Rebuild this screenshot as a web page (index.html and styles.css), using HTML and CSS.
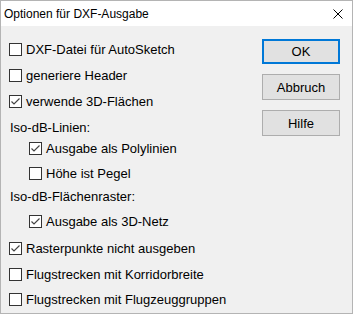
FILE: index.html
```html
<!DOCTYPE html>
<html lang="de">
<head>
<meta charset="utf-8">
<title>Optionen für DXF-Ausgabe</title>
<link rel="stylesheet" href="styles.css">
</head>
<body>
<div class="window">
  <div class="titlebar">
    <span class="title">Optionen für DXF-Ausgabe</span>
    <svg class="close" width="10" height="10" viewBox="0 0 10 10"><path d="M0.5 0.5 L9.5 9.5 M9.5 0.5 L0.5 9.5" stroke="#000" stroke-width="1" fill="none"/></svg>
  </div>
  <div class="content">
    <div class="options">
      <div class="row r26"><span class="box"></span><span class="lbl">DXF-Datei für AutoSketch</span></div>
      <div class="row r26"><span class="box"></span><span class="lbl">generiere Header</span></div>
      <div class="row r26"><span class="box checked"><svg width="11" height="11" viewBox="0 0 11 11"><polyline points="1.5,5.5 4,8 9.5,2.5" fill="none" stroke="#444" stroke-width="1.2"/></svg></span><span class="lbl">verwende 3D-Flächen</span></div>
      <div class="row r21"><span class="lbl heading">Iso-dB-Linien:</span></div>
      <div class="row r25 indent"><span class="box checked"><svg width="11" height="11" viewBox="0 0 11 11"><polyline points="1.5,5.5 4,8 9.5,2.5" fill="none" stroke="#444" stroke-width="1.2"/></svg></span><span class="lbl">Ausgabe als Polylinien</span></div>
      <div class="row r23 indent"><span class="box"></span><span class="lbl">Höhe ist Pegel</span></div>
      <div class="row r25"><span class="lbl heading">Iso-dB-Flächenraster:</span></div>
      <div class="row r27 indent"><span class="box checked"><svg width="11" height="11" viewBox="0 0 11 11"><polyline points="1.5,5.5 4,8 9.5,2.5" fill="none" stroke="#444" stroke-width="1.2"/></svg></span><span class="lbl">Ausgabe als 3D-Netz</span></div>
      <div class="row r26"><span class="box checked"><svg width="11" height="11" viewBox="0 0 11 11"><polyline points="1.5,5.5 4,8 9.5,2.5" fill="none" stroke="#444" stroke-width="1.2"/></svg></span><span class="lbl">Rasterpunkte nicht ausgeben</span></div>
      <div class="row r25"><span class="box"></span><span class="lbl">Flugstrecken mit Korridorbreite</span></div>
      <div class="row r26"><span class="box"></span><span class="lbl">Flugstrecken mit Flugzeuggruppen</span></div>
    </div>
    <div class="buttons">
      <button class="btn default">OK</button>
      <button class="btn">Abbruch</button>
      <button class="btn">Hilfe</button>
    </div>
  </div>
</div>
</body>
</html>
```
FILE: styles.css
```css
* { box-sizing: border-box; }
html, body { margin: 0; padding: 0; background: #ffffff; }
body { width: 354px; height: 315px; overflow: hidden; font-family: "Liberation Sans", Arial, sans-serif; color: #000; }
.window {
  width: 353px;
  height: 314px;
  border: 1px solid #b4b4b4;
  background: #f0f0f0;
  display: flex;
  flex-direction: column;
}
.titlebar {
  height: 25px;
  background: #ffffff;
  display: flex;
  align-items: center;
  justify-content: space-between;
  padding: 0 9px 0 3px;
}
.title { font-size: 12px; position: relative; top: 0; }
.close { display: block; }
.content {
  flex: 1;
  display: flex;
  justify-content: space-between;
  padding: 11px 12px 0 8px;
}
.options { display: flex; flex-direction: column; }
.row { display: flex; align-items: flex-start; font-size: 13px; }
.r21 { height: 21px; } .r23 { height: 23px; } .r25 { height: 25px; }
.r26 { height: 26px; } .r27 { height: 27px; }
.indent { padding-left: 20px; }
.box {
  width: 13px; height: 13px;
  margin-top: 6px;
  border: 1px solid #333333;
  background: #ffffff;
  flex: none;
  display: flex;
  align-items: center;
  justify-content: center;
}
.box svg { display: block; }
.lbl { line-height: 26px; margin-left: 4px; white-space: nowrap; }
.heading { margin-left: 1px; }
.buttons { display: flex; flex-direction: column; gap: 10px; padding-top: 2px; }
.btn {
  width: 78px; height: 26px;
  background: #e1e1e1;
  border: 1px solid #adadad;
  font-family: "Liberation Sans", Arial, sans-serif;
  font-size: 13px;
  color: #000;
  padding: 0;
  margin: 0;
}
.btn.default { border: 2px solid #0078d7; height: 25px; }
```
